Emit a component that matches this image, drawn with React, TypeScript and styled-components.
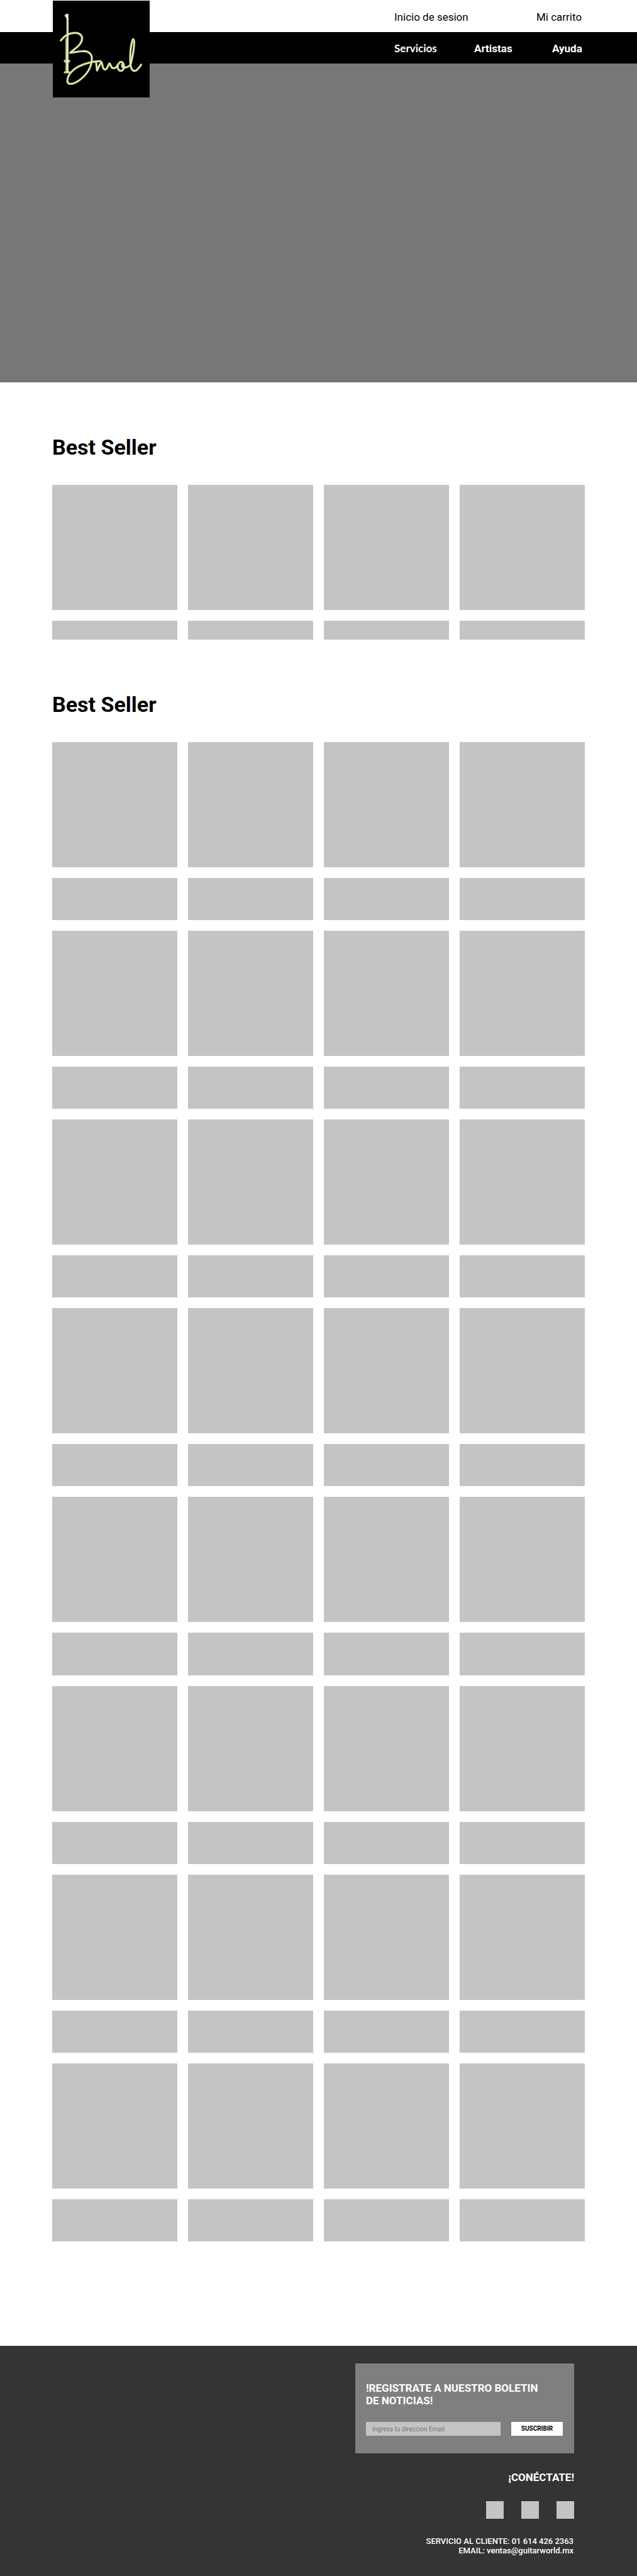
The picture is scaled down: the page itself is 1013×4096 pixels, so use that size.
import React from "react";
import styled, { createGlobalStyle } from "styled-components";

const GlobalStyle = createGlobalStyle`
  *, *::before, *::after { box-sizing: border-box; }
  body { margin: 0; background: #fff; color: #000; font-family: Roboto, "Liberation Sans", sans-serif; }
  h2, p, ul { margin: 0; padding: 0; }
  a { color: inherit; text-decoration: none; }
`;

const Header = styled.header`
  position: relative;
`;

const Bar = styled.nav<{ $columns: string; $dark?: boolean }>`
  display: grid;
  grid-template-columns: ${(p) => p.$columns};
  justify-content: end;
  align-items: center;
  height: ${(p) => (p.$dark ? 50 : 51)}px;
  padding: 2px 88px 0 0;
  font-size: 17px;
  line-height: 20px;
  font-weight: ${(p) => (p.$dark ? 700 : 400)};
  white-space: nowrap;
  color: ${(p) => (p.$dark ? "#fff" : "#000")};
  background: ${(p) => (p.$dark ? "#000" : "#fff")};
`;

const GeometricLink = styled.a`
  font-family: Lato, Roboto, sans-serif;
`;

const LogoLink = styled.a`
  position: absolute;
  top: 1px;
  left: 84px;
  width: 154px;
  height: 154px;
  background: #000;

  svg { display: block; width: 100%; height: 100%; }
`;

const Hero = styled.section`
  height: 507px;
  background: #777;
`;

const Main = styled.main`
  padding-bottom: 166px;
`;

const Section = styled.section`
  padding: 83px 83px 0;
`;

const Title = styled.h2`
  margin-bottom: 40px;
  font-size: 34px;
  line-height: 40px;
  font-weight: 700;
`;

const Grid = styled.ul`
  display: grid;
  grid-template-columns: repeat(4, 1fr);
  gap: 17px;
  list-style: none;
`;

const Card = styled.li`
  display: flex;
  flex-direction: column;
  gap: 17px;
`;

const Block = styled.div<{ $ratio: string }>`
  aspect-ratio: ${(p) => p.$ratio};
  background: #c4c4c4;
`;

const Footer = styled.footer`
  display: flex;
  flex-direction: column;
  align-items: flex-end;
  padding: 28px 100px 33px;
  color: #fff;
  background: #343434;
`;

const Newsletter = styled.form`
  width: 348px;
  padding: 29px 18px 28px 17px;
  background: #7f7f7f;
`;

const FooterTitle = styled.h2`
  max-width: 280px;
  font-size: 17px;
  line-height: 20px;
  font-weight: 700;
`;

const Fields = styled.div`
  display: flex;
  gap: 17px;
  margin-top: 24px;
`;

const EmailInput = styled.input`
  flex: 1;
  min-width: 0;
  height: 22px;
  padding: 0 10px;
  border: 0;
  border-radius: 0;
  background: #c4c4c4;
  font: 400 10px/14px Roboto, sans-serif;
  color: #000;

  &::placeholder { color: #777; opacity: 1; }
`;

const SubscribeButton = styled.button`
  width: 82px;
  height: 22px;
  padding: 0;
  border: 0;
  background: #fff;
  color: #000;
  font: 700 10px/14px Roboto, sans-serif;
`;

const Connect = styled.div`
  display: flex;
  flex-direction: column;
  align-items: flex-end;
  gap: 28px;
  margin-top: 28px;
`;

const Socials = styled.div`
  display: flex;
  gap: 28px;
`;

const SocialLink = styled.a`
  width: 28px;
  height: 28px;
  background: #c4c4c4;
`;

const Contact = styled.p`
  padding-right: 1px;
  font-size: 13px;
  line-height: 15px;
  font-weight: 500;
  text-align: right;
`;

const strokes = [
  "M18 90 C26 80 38 73 50 73 C61 73 67 79 66 87 C65 100 50 108 39 118 C50 117 60 114 71 114 C83 115 90 123 88 134 C87 152 76 168 60 180 C50 187 43 189 38 188 C31 187 32 178 36 169 C44 156 58 148 70 144 C82 140 94 137 108 137",
  "M98 140 L100 158 C103 152 106 144 110 139 C113 142 111 155 118 156 C124 155 125 145 128 142 C132 144 130 152 137 153 C142 153 145 149 147 145",
  "M160 144 C158 138 153 137 150 141 C146 145 146 151 148 155 C151 160 156 160 159 156 C162 152 161 144 159 142 C155 145 156 151 161 151 C168 152 173 148 176 144 C181 125 184 105 184 93 C183 86 181 86 180 90 C176 103 175 115 175 129 C175 146 176 157 184 159 C190 160 195 151 200 145",
];

function Logo() {
  return (
    <svg viewBox="0 0 219 219" role="img" aria-label="Bmol">
      <defs>
        <filter id="glow" x="-10%" y="-10%" width="120%" height="120%">
          <feGaussianBlur stdDeviation="1.1" />
        </filter>
      </defs>
      <g fill="none" stroke="#a8b55e" strokeWidth="5" strokeLinecap="round" strokeLinejoin="round" filter="url(#glow)">
        {strokes.map((d) => <path key={d} d={d} />)}
        <path d="M29 34 L33 32 V162 M31 87 V162 M27 137 H37 M27 162 H37" />
      </g>
      <g fill="none" stroke="#fff" strokeWidth="1.7" strokeLinecap="round" strokeLinejoin="round">
        {strokes.map((d) => <path key={d} d={d} />)}
        <path strokeWidth="2" d="M34 40 V162" />
        <path strokeWidth="1.2" d="M31 87 V162 M26 135 H38 M26 139 H38 M26 162 H38" />
        <path fill="#fff" strokeWidth="1" d="M29 32 L34 30 V43 L29 36 Z" />
      </g>
    </svg>
  );
}

const FEATURED = [1, 2, 3, 4];
const CATALOG = Array.from({ length: 32 }, (_, i) => i + 1);

function Products({ title, items, caption }: { title: string; items: number[]; caption: string }) {
  return (
    <Section>
      <Title>{title}</Title>
      <Grid>
        {items.map((id) => (
          <Card key={id}>
            <Block $ratio="1" />
            <Block $ratio={caption} />
          </Card>
        ))}
      </Grid>
    </Section>
  );
}

export default function App() {
  return (
    <>
      <GlobalStyle />
      <Header>
        <Bar $columns="226px 72px">
          <a href="#sesion">Inicio de sesion</a>
          <a href="#carrito">Mi carrito</a>
        </Bar>
        <Bar $columns="127px 124px 47px" $dark>
          <GeometricLink href="#servicios">Servicios</GeometricLink>
          <a href="#artistas">Artistas</a>
          <a href="#ayuda">Ayuda</a>
        </Bar>
        <LogoLink href="#inicio"><Logo /></LogoLink>
      </Header>
      <Main>
        <Hero />
        <Products title="Best Seller" items={FEATURED} caption="74 / 11" />
        <Products title="Best Seller" items={CATALOG} caption="74 / 25" />
      </Main>
      <Footer>
        <Newsletter onSubmit={(e) => e.preventDefault()}>
          <FooterTitle>!REGISTRATE A NUESTRO BOLETIN DE NOTICIAS!</FooterTitle>
          <Fields>
            <EmailInput type="email" aria-label="Email" placeholder="Ingresa tu direccion Email" />
            <SubscribeButton type="submit">SUSCRIBIR</SubscribeButton>
          </Fields>
        </Newsletter>
        <Connect>
          <FooterTitle>¡CONÉCTATE!</FooterTitle>
          <Socials>
            <SocialLink href="#facebook" aria-label="Facebook" />
            <SocialLink href="#instagram" aria-label="Instagram" />
            <SocialLink href="#youtube" aria-label="YouTube" />
          </Socials>
          <Contact>
            SERVICIO AL CLIENTE: 01 614 426 2363<br />
            EMAIL: ventas@guitarworld.mx
          </Contact>
        </Connect>
      </Footer>
    </>
  );
}
